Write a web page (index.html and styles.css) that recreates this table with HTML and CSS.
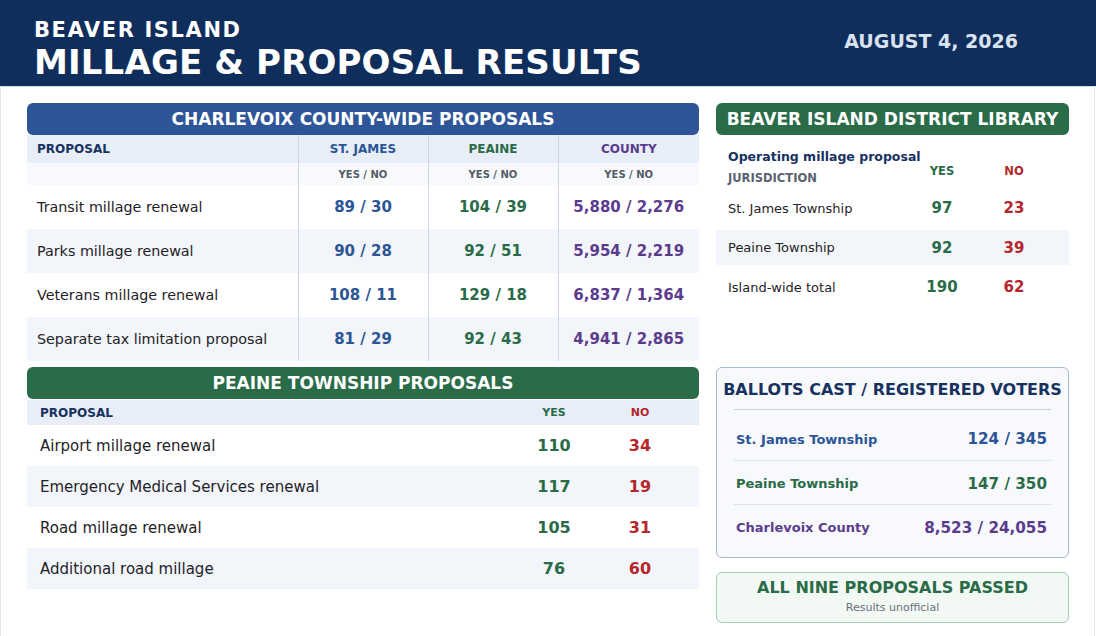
FILE: index.html
```html
<!DOCTYPE html>
<html lang="en">
<head>
<meta charset="utf-8">
<title>Beaver Island Millage &amp; Proposal Results</title>
<link rel="stylesheet" href="styles.css">
</head>
<body>
<header class="masthead">
  <div class="masthead-titles">
    <div class="kicker">BEAVER ISLAND</div>
    <h1 class="headline">MILLAGE &amp; PROPOSAL RESULTS</h1>
  </div>
  <div class="date">AUGUST 4, 2026</div>
</header>
<main class="board">
  <section class="panel county">
    <h2 class="bar bar-blue">CHARLEVOIX COUNTY-WIDE PROPOSALS</h2>
    <table class="results county-table">
      <colgroup><col class="c-prop"><col class="c-num"><col class="c-num"><col class="c-county"></colgroup>
      <thead>
        <tr class="head-row"><th class="prop-h">PROPOSAL</th><th class="t-blue">ST. JAMES</th><th class="t-green">PEAINE</th><th class="t-purple">COUNTY</th></tr>
        <tr class="sub-row"><th></th><th>YES / NO</th><th>YES / NO</th><th>YES / NO</th></tr>
      </thead>
      <tbody>
        <tr><td class="prop">Transit millage renewal</td><td class="n t-blue">89 / 30</td><td class="n t-green">104 / 39</td><td class="n t-purple">5,880 / 2,276</td></tr>
        <tr><td class="prop">Parks millage renewal</td><td class="n t-blue">90 / 28</td><td class="n t-green">92 / 51</td><td class="n t-purple">5,954 / 2,219</td></tr>
        <tr><td class="prop">Veterans millage renewal</td><td class="n t-blue">108 / 11</td><td class="n t-green">129 / 18</td><td class="n t-purple">6,837 / 1,364</td></tr>
        <tr><td class="prop">Separate tax limitation proposal</td><td class="n t-blue">81 / 29</td><td class="n t-green">92 / 43</td><td class="n t-purple">4,941 / 2,865</td></tr>
      </tbody>
    </table>
  </section>

  <section class="panel library">
    <h2 class="bar bar-green">BEAVER ISLAND DISTRICT LIBRARY</h2>
    <div class="lib-head">
      <div class="lib-head-label">
        <div class="lib-caption">Operating millage proposal</div>
        <div class="lib-juris">JURISDICTION</div>
      </div>
      <div class="lib-col t-green">YES</div>
      <div class="lib-col t-red">NO</div>
    </div>
    <div class="lib-rows">
      <div class="lib-row"><span>St. James Township</span><b class="t-green">97</b><b class="t-red">23</b></div>
      <div class="lib-row alt"><span>Peaine Township</span><b class="t-green">92</b><b class="t-red">39</b></div>
      <div class="lib-row"><span>Island-wide total</span><b class="t-green">190</b><b class="t-red">62</b></div>
    </div>
  </section>

  <section class="panel peaine">
    <h2 class="bar bar-green">PEAINE TOWNSHIP PROPOSALS</h2>
    <table class="results peaine-table">
      <colgroup><col><col class="c-yes"><col class="c-no"></colgroup>
      <thead>
        <tr class="head-row"><th class="prop-h">PROPOSAL</th><th class="t-green">YES</th><th class="t-red no-col">NO</th></tr>
      </thead>
      <tbody>
        <tr><td class="prop">Airport millage renewal</td><td class="n t-green">110</td><td class="n t-red no-col">34</td></tr>
        <tr><td class="prop">Emergency Medical Services renewal</td><td class="n t-green">117</td><td class="n t-red no-col">19</td></tr>
        <tr><td class="prop">Road millage renewal</td><td class="n t-green">105</td><td class="n t-red no-col">31</td></tr>
        <tr><td class="prop">Additional road millage</td><td class="n t-green">76</td><td class="n t-red no-col">60</td></tr>
      </tbody>
    </table>
  </section>

  <aside class="side">
    <section class="ballots">
      <h2 class="ballots-title">BALLOTS CAST / REGISTERED VOTERS</h2>
      <div class="ballot-rows">
        <div class="ballot-row t-blue"><span>St. James Township</span><b>124 / 345</b></div>
        <div class="ballot-row t-green"><span>Peaine Township</span><b>147 / 350</b></div>
        <div class="ballot-row t-purple"><span>Charlevoix County</span><b>8,523 / 24,055</b></div>
      </div>
    </section>
    <section class="passed">
      <div class="passed-title">ALL NINE PROPOSALS PASSED</div>
      <div class="passed-note">Results unofficial</div>
    </section>
  </aside>
</main>
</body>
</html>
```
FILE: styles.css
```css
* { box-sizing: border-box; margin: 0; padding: 0; }
html, body { background: #ffffff; }
body {
  font-family: "DejaVu Sans", "Liberation Sans", sans-serif;
  color: #1f2328;
  width: 1096px;
  height: 636px;
  overflow: hidden;
}

.t-blue { color: #2c5596; }
.t-green { color: #2a6b47; }
.t-purple { color: #5b3c8c; }
.t-red { color: #b3272d; }

/* Masthead */
.masthead {
  height: 86px;
  background: #0f2e5b;
  display: flex;
  justify-content: space-between;
  align-items: flex-start;
  padding: 0 78px 0 34px;
}
.kicker {
  font-size: 21px;
  letter-spacing: 1.6px;
  font-weight: bold;
  color: #ffffff;
  line-height: 24px;
  margin-top: 18px;
}
.headline {
  font-size: 34px;
  letter-spacing: 0.15px;
  font-weight: bold;
  color: #ffffff;
  line-height: 38px;
  margin-top: 1px;
}
.date {
  font-size: 19px;
  font-weight: bold;
  color: #d9e2f0;
  line-height: 22px;
  margin-top: 30px;
}

/* Board */
.board {
  width: 1095px;
  height: 550px;
  display: grid;
  grid-template-columns: 672px 353px;
  column-gap: 17px;
  row-gap: 6px;
  align-items: start;
  align-content: start;
  padding: 16px 26px 0;
  border-top: 1px solid #d3dbe7;
  border-left: 1px solid #e3e7ed;
  border-right: 1px solid #e3e7ed;
}

.bar {
  height: 32px;
  line-height: 32px;
  border-radius: 6px;
  color: #ffffff;
  font-size: 17px;
  font-weight: bold;
  text-align: center;
  white-space: nowrap;
}
.bar-blue { background: #2e5597; }
.bar-green { background: #2a6b48; }

/* Tables */
.results {
  width: 100%;
  table-layout: fixed;
  border-collapse: collapse;
}
.results th { font-weight: bold; }
.head-row th {
  background: #e7eef7;
  font-size: 12px;
  text-align: center;
}
.prop-h { text-align: left !important; color: #17325f; }
.results td.n { font-weight: bold; text-align: center; }
.results tbody tr:nth-child(even) { background: #f2f5f9; }

.c-prop { width: 271px; }
.c-num { width: 130px; }
.c-county { width: 141px; }

.county-table .head-row th { height: 28px; }
.county-table .prop-h { padding-left: 10px; }
.county-table .sub-row th {
  height: 22px;
  background: #f7f9fc;
  font-size: 10px;
  color: #555c66;
  text-align: center;
}
.county-table td { height: 44px; font-size: 14.3px; }
.county-table td.prop { padding-left: 10px; }
.county-table td.n { font-size: 15px; }
.county-table th + th,
.county-table td + td { border-left: 1px solid #cdd6e4; }

.peaine-table { margin-top: 1px; }
.c-yes { width: 88px; }
.c-no { width: 101px; }
.no-col { padding-right: 17px; }
.peaine-table .head-row th { height: 25px; }
.peaine-table .head-row th.t-green,
.peaine-table .head-row th.t-red { font-size: 11px; }
.peaine-table .prop-h { padding-left: 13px; }
.peaine-table td { height: 41px; font-size: 15px; }
.peaine-table td.prop { padding-left: 13px; }
.peaine-table td.n { font-size: 16px; }

/* Library */
.lib-head {
  display: grid;
  grid-template-columns: minmax(0, 1fr) 76px 68px;
  padding: 14px 21px 0 12px;
  align-items: end;
}
.lib-head-label { white-space: nowrap; }
.lib-caption {
  font-size: 12.5px;
  font-weight: bold;
  color: #17325f;
  line-height: 16px;
}
.lib-juris {
  font-size: 11.5px;
  font-weight: bold;
  color: #5a6270;
  line-height: 16px;
  margin-top: 5px;
}
.lib-col {
  font-size: 11.5px;
  font-weight: bold;
  text-align: center;
  line-height: 16px;
  padding-bottom: 7px;
}
.lib-rows {
  display: flex;
  flex-direction: column;
  gap: 4.5px;
  margin-top: 4.5px;
}
.lib-row {
  display: grid;
  grid-template-columns: minmax(0, 1fr) 76px 68px;
  align-items: center;
  height: 35px;
  padding: 0 21px 0 12px;
  font-size: 13px;
}
.lib-row.alt { background: #f2f5f9; }
.lib-row b { font-size: 15px; text-align: center; }

/* Side column */
.side {
  display: flex;
  flex-direction: column;
  gap: 14px;
}
.ballots {
  border: 1.5px solid #a9b9d1;
  border-radius: 6px;
  background: #f8f9fd;
  padding: 0 17px 9px;
}
.ballots-title {
  font-size: 16px;
  font-weight: bold;
  color: #17325f;
  text-align: center;
  line-height: 20px;
  padding: 12px 0 9px;
  border-bottom: 1px solid #c6cfdd;
  white-space: nowrap;
  display: flex;
  justify-content: center;
}
.ballot-rows { margin-top: 6px; }
.ballot-row {
  display: flex;
  justify-content: space-between;
  align-items: center;
  height: 44px;
  padding: 2px 4px 0 2px;
  font-weight: bold;
}
.ballot-row + .ballot-row { border-top: 1px solid #dde2ea; }
.ballot-row span { font-size: 13px; }
.ballot-row b { font-size: 15.2px; }

.passed {
  height: 51px;
  border: 1.5px solid #a7cdb3;
  border-radius: 6px;
  background: #f2f8f4;
  text-align: center;
  padding-top: 5.5px;
}
.passed-title {
  font-size: 16px;
  font-weight: bold;
  color: #2a6b47;
  line-height: 18px;
}
.passed-note {
  font-size: 11px;
  color: #6b7079;
  line-height: 14px;
  margin-top: 4px;
}
```
